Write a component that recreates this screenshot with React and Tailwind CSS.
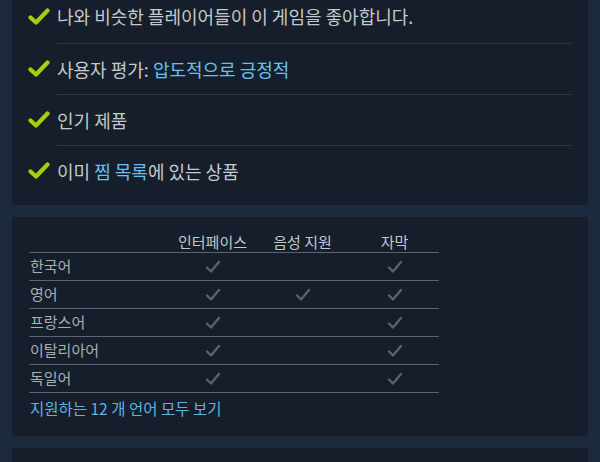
import React from 'react';

const font = { fontFamily: '"Noto Sans CJK KR", "Noto Sans", sans-serif' };

const LimeCheck = () => (
    <svg width="22" height="17" viewBox="0 0 22 17" className="shrink-0">
        <path d="M2.5 9.5 L8 14.5 L19.5 2.5" fill="none" stroke="#a4d007" strokeWidth="4.2" strokeLinecap="round" strokeLinejoin="round" />
    </svg>
);

const GrayCheck = () => (
    <svg width="14" height="12" viewBox="0 0 14 12">
        <path d="M1 6.5 L5 10.5 L13 1" fill="none" stroke="#5f6163" strokeWidth="2.4" strokeLinecap="round" strokeLinejoin="round" />
    </svg>
);

const features = [
    <>나와 비슷한 플레이어들이 이 게임을 좋아합니다.</>,
    <>사용자 평가: <span className="text-[#66c0f4]">압도적으로 긍정적</span></>,
    <>인기 제품</>,
    <>이미 <span className="text-[#66c0f4]">찜 목록</span>에 있는 상품</>,
];

const languages = [
    { name: '한국어', ui: true, voice: false, sub: true },
    { name: '영어', ui: true, voice: true, sub: true },
    { name: '프랑스어', ui: true, voice: false, sub: true },
    { name: '이탈리아어', ui: true, voice: false, sub: true },
    { name: '독일어', ui: true, voice: false, sub: true },
];

export default function App() {
    return (
        <div className="w-[600px] h-[462px] overflow-hidden bg-[#1b2a3d] px-3" style={font}>
            <div className="-mt-[10px] bg-[#161e2b] pl-4 pr-[17px] pb-[9px]">
                {features.map((f, i) => (
                    <div key={i} className="flex items-stretch">
                        <div className="w-[29px] flex items-center">
                            <LimeCheck />
                        </div>
                        <div className={`flex-1 flex items-center text-[18px] text-[#c5c9cc] ${i === 0 ? 'h-[53px]' : 'h-[51px] border-t border-[#2c3a4b]'}`}>
                            <span>{f}</span>
                        </div>
                    </div>
                ))}
            </div>

            <div className="mt-3 bg-[#161e2b] px-[17px] pt-[16px] pb-[12px]">
                <div className="w-[410px]">
                    <div className="grid grid-cols-[141px_85px_95px_89px] h-[20px] items-center border-b border-[#5b636e] text-[15px] text-[#c3c7cb] leading-none">
                        <div></div>
                        <div className="text-center -mt-[2px]">인터페이스</div>
                        <div className="text-center -mt-[2px]">음성 지원</div>
                        <div className="text-center -mt-[2px]">자막</div>
                    </div>
                    {languages.map((l) => (
                        <div key={l.name} className="grid grid-cols-[141px_85px_95px_89px] h-[28px] items-center border-b border-[#5b636e] text-[15px] text-[#a9aeb2]">
                            <div className="pl-[1px]">{l.name}</div>
                            <div className="flex justify-center">{l.ui && <GrayCheck />}</div>
                            <div className="flex justify-center">{l.voice && <GrayCheck />}</div>
                            <div className="flex justify-center">{l.sub && <GrayCheck />}</div>
                        </div>
                    ))}
                </div>
                <div className="h-[31px] flex items-center text-[15.5px] text-[#5fb1e2] pl-[1px]">지원하는 12 개 언어 모두 보기</div>
            </div>

            <div className="mt-3 bg-[#161e2b] h-[40px]"></div>
        </div>
    );
}
